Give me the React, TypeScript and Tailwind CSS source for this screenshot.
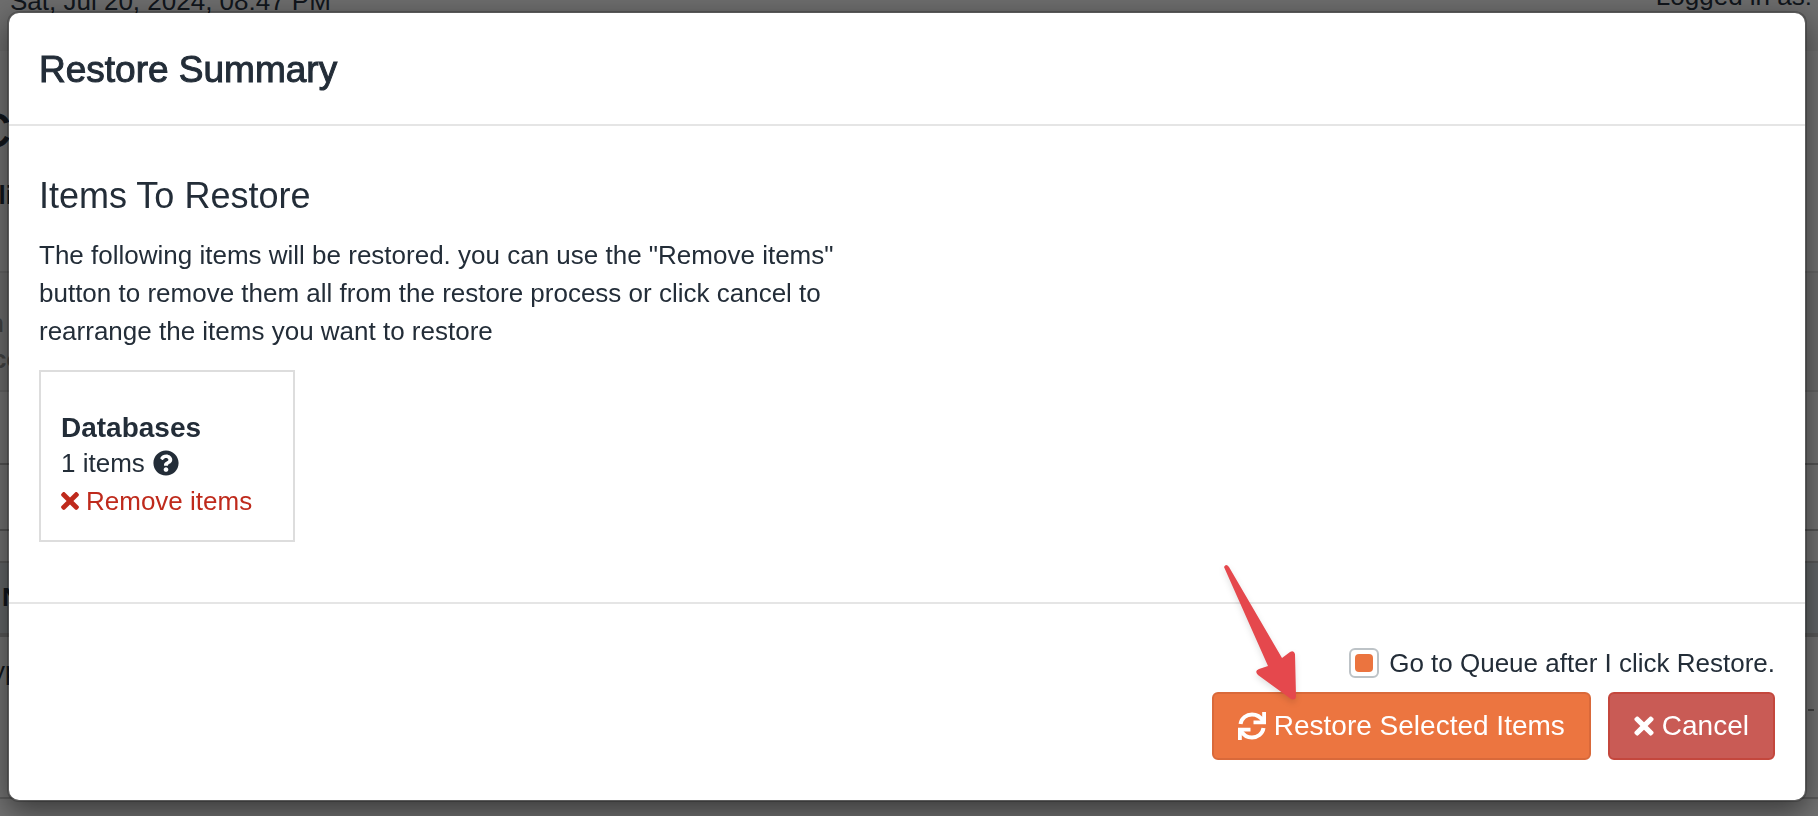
import { useState } from 'react'
import type { ReactNode } from 'react'
import { FaTimes, FaQuestionCircle } from 'react-icons/fa'

const groups = [{ id: 1, name: 'Databases', count: 1 }]

function SyncIcon() {
  return (
    <svg viewBox="0 0 28 28" className="h-7 w-7" fill="none" stroke="currentColor" strokeWidth="4" aria-hidden="true">
      <path d="M2.500 12C3.500 6 8.500 2.500 14 2.500c4.500 0 8.500 2.300 11 6.500" />
      <path d="M25.500 16C24.500 22 19.500 25.500 14 25.500c-4.500 0-8.500-2.300-11-6.500" />
      <path d="M24.200 0H28v12.200H15.500V8.500h8.700zM3.800 28H0V15.800h12.500v3.700H3.800z" fill="currentColor" stroke="none" />
    </svg>
  )
}

function Arrow() {
  return (
    <svg viewBox="0 0 76 140" className="pointer-events-none absolute right-[507px] bottom-24 h-35 w-19 drop-shadow-md" aria-hidden="true">
      <path d="M2 3Q4-1 7 3L60 94L68 88Q72 86 73 90L74 132Q74 137 69 135L36 111Q32 107 37 105L46 102Z" fill="#e5484d" />
    </svg>
  )
}

function Row({ className, children }: { className: string; children?: ReactNode }) {
  return <div className={`overflow-hidden whitespace-nowrap ${className}`}>{children}</div>
}

function Backdrop() {
  return (
    <div className="fixed inset-0 overflow-hidden bg-[#e6e6e6]" aria-hidden="true">
      <header className="flex h-[51px] justify-between bg-[#dcdcdc] pr-1.5 pl-2.5">
        <p className="-mt-[15px] text-[26px] leading-8">Sat, Jul 20, 2024, 08:47 PM</p>
        <p className="-mt-5 text-[26px] leading-8">Logged in as:</p>
      </header>
      <Row className="h-[220px] pt-14">
        <p className="-ml-6 text-5xl [-webkit-text-stroke:1px_#232d38]">C</p>
        <p className="-ml-4 mt-5 text-[26px] leading-10 font-bold">cli</p>
      </Row>
      <Row className="h-[121px] border-y-2 border-[#cccccc] bg-[#dddddd] pt-8 text-[26px] leading-9 font-bold text-[#888888]">
        <p className="-ml-3">n</p>
        <p className="-ml-2">co</p>
      </Row>
      <Row className="h-[73px] border-b-2 border-[#aaaaaa]" />
      <Row className="h-[66px] border-b-2 border-[#aaaaaa]" />
      <Row className="h-[30px]" />
      <Row className="h-[76px] border-t-2 border-b-4 border-[#b4b4b4] bg-[#c9ced3] pt-4 text-[26px] leading-9 font-bold">
        <p className="pl-0.5">N</p>
      </Row>
      <Row className="flex h-[162px] justify-between border-b-2 border-[#bbbbbb] pt-4 pr-1 text-[26px] leading-9">
        <p className="-ml-2">yp</p>
        <span className="mt-14 h-0.5 w-1.5 bg-[#888888]" />
      </Row>
      <div className="absolute inset-0 bg-black/50" />
    </div>
  )
}

export default function App() {
  const [items, setItems] = useState(groups)
  const [goToQueue, setGoToQueue] = useState(true)

  return (
    <div className="min-h-screen font-['Liberation_Sans',Arial,sans-serif] text-[26px] leading-[38px] text-[#232d38]">
      <Backdrop />
      <div className="relative pt-[11px] pr-[11px] pb-3.5 pl-[7px]">
        <div role="dialog" aria-labelledby="title" className="rounded-xl border-2 border-black/20 bg-white bg-clip-padding shadow-[0_10px_30px_rgba(0,0,0,0.5)]">
          <div className="border-b-2 border-[#e5e5e5] px-[30px] pt-[37px] pb-[34px]">
            <h1 id="title" className="text-[37px] leading-10 [-webkit-text-stroke:1px_#232d38]">Restore Summary</h1>
          </div>

          <div className="px-[30px] pt-[50px] pb-[60px]">
            <h2 className="text-4xl leading-10">Items To Restore</h2>
            <p className="mt-5 w-1/2">
              The following items will be restored. you can use the "Remove items" button to remove them all from the restore process or click cancel to rearrange the items you want to restore
            </p>
            <div className="mt-5 flex gap-5">
              {items.map(item => (
                <section key={item.id} className="w-64 border-2 border-[#dddddd] px-5 pt-10 pb-5">
                  <h3 className="text-[28px] leading-8 font-bold">{item.name}</h3>
                  <p className="flex items-center gap-2">{item.count} items <FaQuestionCircle className="size-[26px]" /></p>
                  <button type="button" onClick={() => setItems(items.filter(i => i.id !== item.id))} className="flex items-center gap-[7px] text-[#bf2a1c]">
                    <FaTimes className="w-[18px]" />Remove items
                  </button>
                </section>
              ))}
            </div>
          </div>

          <div className="relative flex flex-col items-end border-t-2 border-[#e5e5e5] px-[30px] pt-10 pb-10">
            <label className="flex items-center gap-2.5">
              <input
                type="checkbox" checked={goToQueue} onChange={e => setGoToQueue(e.target.checked)}
                className="grid size-[30px] appearance-none place-items-center rounded-md border-2 border-[#bdc3c7] bg-white before:size-[18px] before:rounded-sm checked:before:bg-[#eb743f]"
              />
              Go to Queue after I click Restore.
            </label>
            <div className="mt-2.5 flex gap-[17px] text-[28px] leading-10 text-white">
              <button type="button" className="flex h-17 items-center gap-2 rounded-md border-2 border-[#d9693a] bg-[#ec7540] px-6">
                <SyncIcon />Restore Selected Items
              </button>
              <button type="button" className="flex h-17 items-center gap-2 rounded-md border-2 border-[#c4473d] bg-[#c95b55] px-6">
                <FaTimes className="w-5" />Cancel
              </button>
            </div>
            <Arrow />
          </div>
        </div>
      </div>
    </div>
  )
}
